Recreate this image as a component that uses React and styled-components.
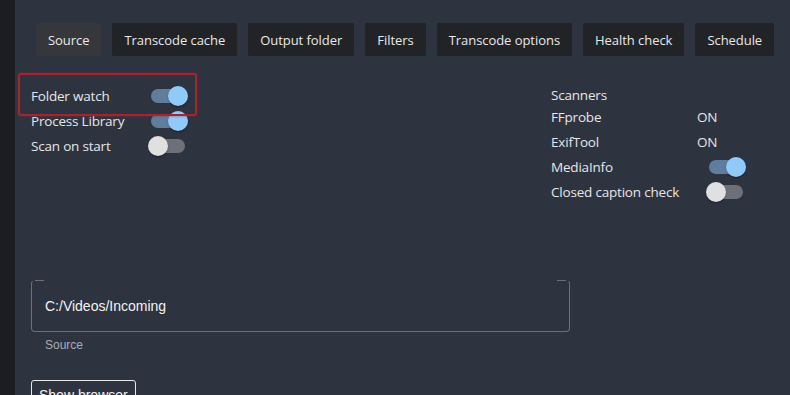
import React from "react";
import styled, { createGlobalStyle } from "styled-components";

const Global = createGlobalStyle`
  html, body { margin: 0; padding: 0; background: #2e3340; }
  body { font-family: "Open Sans", "Noto Sans", sans-serif; color: #e6e6e6; overflow: hidden; }
  #root { height: 395px; }
`;

const Shell = styled.div`
  display: flex;
  height: 395px;
`;

const Sidebar = styled.div`
  width: 15px;
  flex: none;
  background: #1c1d22;
`;

const Main = styled.div`
  flex: 1;
  padding: 23px 0 0 16px;
  position: relative;
`;

const Tabs = styled.div`
  display: flex;
  gap: 11px;
  margin-left: 5px;
`;

const Tab = styled.div`
  height: 33px;
  display: flex;
  align-items: center;
  padding: 0 12px;
  font-size: 13px;
  letter-spacing: -0.05px;
  color: #e8e8e8;
  background: ${(p) => (p.$active ? "#36373b" : "#222327")};
  border-radius: 2px;
  white-space: nowrap;
`;

const Columns = styled.div`
  display: grid;
  grid-template-columns: 520px 1fr;
  margin-top: 27px;
`;

const Column = styled.div`
  display: flex;
  flex-direction: column;
`;

const Row = styled.div`
  display: grid;
  grid-template-columns: ${(p) => p.$label}px auto;
  align-items: center;
  height: 25px;
  font-size: 13.5px;
  letter-spacing: -0.2px;
  color: #e6e6e6;
`;

const Heading = styled.div`
  margin-top: 3px;
  height: 18px;
  display: flex;
  align-items: center;
  font-size: 13.5px;
  letter-spacing: -0.2px;
`;

const SwitchRoot = styled.div`
  position: relative;
  width: 58px;
  height: 38px;
  margin: -7px 0;
`;

const Track = styled.div`
  position: absolute;
  left: 12px;
  top: 12px;
  width: 34px;
  height: 14px;
  border-radius: 7px;
  background: ${(p) => (p.$on ? "#90caf9" : "#ffffff")};
  opacity: ${(p) => (p.$on ? 0.5 : 0.3)};
`;

const Thumb = styled.div`
  position: absolute;
  top: 9px;
  left: ${(p) => (p.$on ? 29 : 9)}px;
  width: 20px;
  height: 20px;
  border-radius: 50%;
  background: ${(p) => (p.$on ? "#90caf9" : "#e0e0e0")};
  box-shadow: 0 2px 1px -1px rgba(0,0,0,0.2), 0 1px 1px 0 rgba(0,0,0,0.14), 0 1px 3px 0 rgba(0,0,0,0.12);
`;

const Switch = ({ on }) => (
  <SwitchRoot>
    <Track $on={on} />
    <Thumb $on={on} />
  </SwitchRoot>
);

const Highlight = styled.div`
  position: absolute;
  left: 3px;
  top: 73px;
  width: 175px;
  height: 39px;
  border: 2px solid #a3262c;
  border-radius: 3px;
  box-shadow: 0 0 3px rgba(160, 30, 40, 0.6);
  pointer-events: none;
`;

const Field = styled.div`
  margin-top: 76px;
  width: 539px;
  height: 52px;
  box-sizing: border-box;
  position: relative;
  border: 1px solid #6b6f78;
  border-top-color: transparent;
  border-radius: 4px;
  display: flex;
  align-items: center;
  padding-left: 13px;
  font-family: "Liberation Sans", Arial, sans-serif;
  font-size: 14px;
  color: #f2f2f2;
  &::before, &::after {
    content: "";
    position: absolute;
    top: -1px;
    width: 9px;
    height: 1px;
    background: #6b6f78;
  }
  &::before { left: 3px; }
  &::after { right: 3px; }
`;

const Helper = styled.div`
  font-family: "Liberation Sans", Arial, sans-serif;
  font-size: 12px;
  color: #a9acb3;
  margin: 6px 0 0 14px;
`;

const Button = styled.div`
  margin-top: 28px;
  display: inline-block;
  border: 1px solid #e8e8e8;
  border-radius: 3px;
  padding: 6px 7px;
  font-family: "Liberation Sans", Arial, sans-serif;
  font-size: 14px;
  color: #f0f0f0;
`;

const Value = styled.span`
  font-size: 13.5px;
`;

export default function App() {
  const tabs = ["Source", "Transcode cache", "Output folder", "Filters", "Transcode options", "Health check", "Schedule"];
  return (
    <>
      <Global />
      <Shell>
        <Sidebar />
        <Main>
          <Tabs>
            {tabs.map((t, i) => (
              <Tab key={t} $active={i === 0}>{t}</Tab>
            ))}
          </Tabs>
          <Columns>
            <Column>
              <Row $label={108}><span>Folder watch</span><Switch on /></Row>
              <Row $label={108}><span>Process Library</span><Switch on /></Row>
              <Row $label={108}><span>Scan on start</span><Switch /></Row>
            </Column>
            <Column>
              <Heading>Scanners</Heading>
              <Row $label={146}><span>FFprobe</span><Value>ON</Value></Row>
              <Row $label={146}><span>ExifTool</span><Value>ON</Value></Row>
              <Row $label={146}><span>MediaInfo</span><Switch on /></Row>
              <Row $label={146}><span>Closed caption check</span><Switch /></Row>
            </Column>
          </Columns>
          <Highlight />
          <Field>C:/Videos/Incoming</Field>
          <Helper>Source</Helper>
          <Button>Show browser</Button>
        </Main>
      </Shell>
    </>
  );
}
